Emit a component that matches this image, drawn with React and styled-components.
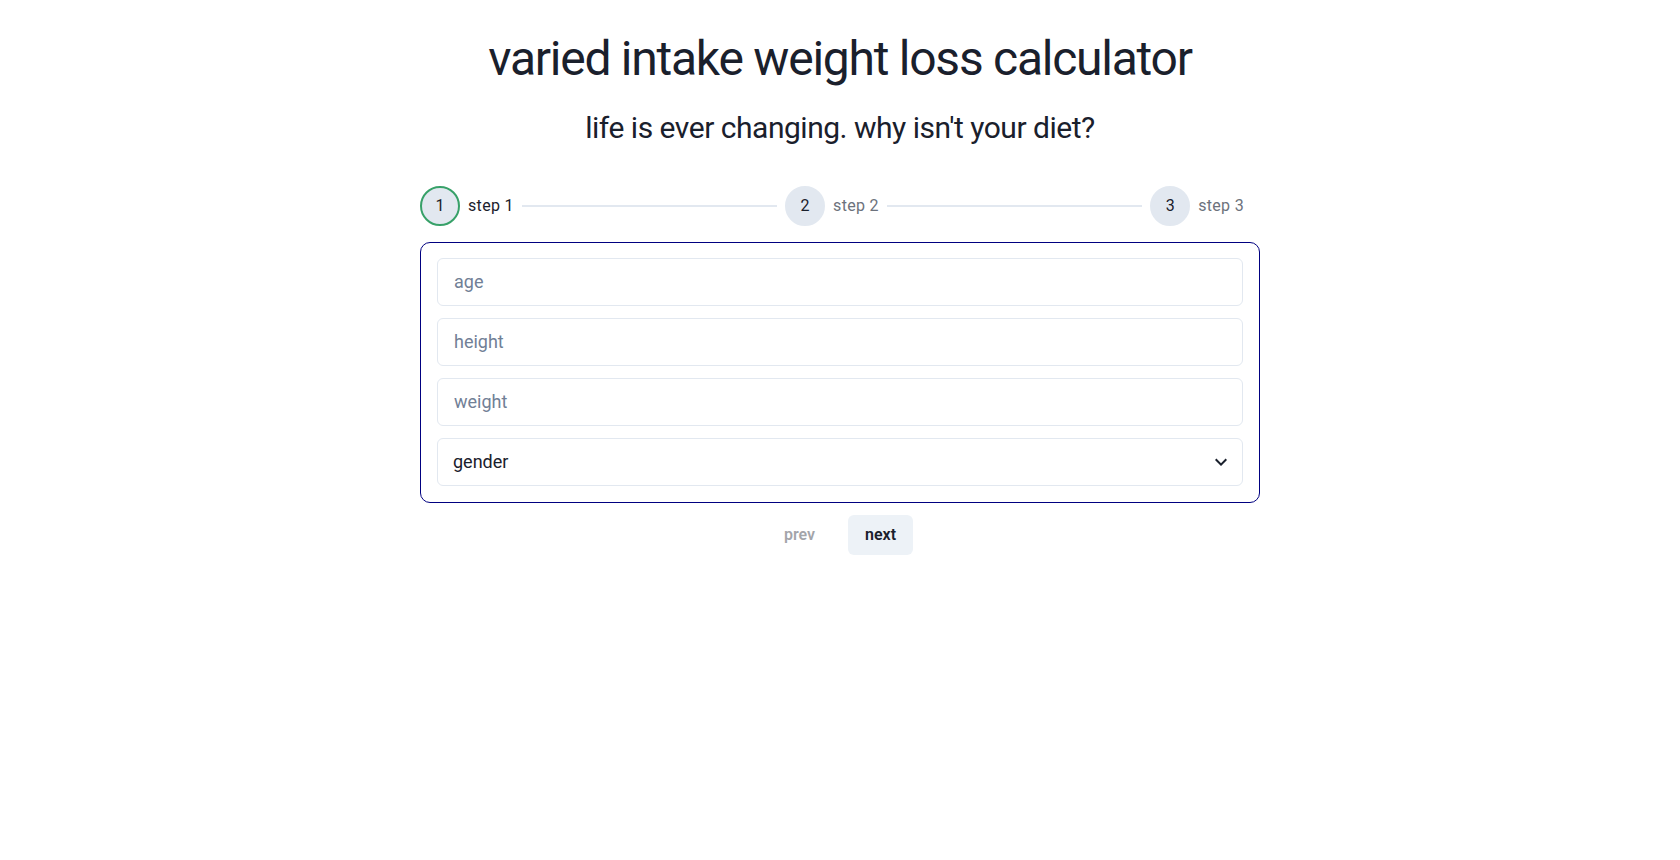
import React from 'react'
import styled, { createGlobalStyle } from 'styled-components'

const GlobalStyle = createGlobalStyle`
  body {
    margin: 0;
    background: #ffffff;
    font-family: Roboto, "Liberation Sans", sans-serif;
    color: #1a202c;
  }
`

const Page = styled.main`
  display: flex;
  flex-direction: column;
  align-items: center;
  padding-top: 30px;
`

const Title = styled.h1`
  margin: 0;
  font-size: 48px;
  line-height: 1.2;
  font-weight: 400;
  letter-spacing: -0.026em;
  color: #1a202c;
`

const Subtitle = styled.h2`
  margin: 22px 0 0;
  font-size: 30px;
  line-height: 1.2;
  font-weight: 400;
  letter-spacing: -0.016em;
  color: #1a202c;
`

const Wizard = styled.section`
  width: 840px;
  margin-top: 40px;
  display: flex;
  flex-direction: column;
`

const Stepper = styled.ol`
  list-style: none;
  margin: 0;
  padding: 0 16px 0 0;
  display: flex;
  gap: 8px;
`

const Step = styled.li`
  display: flex;
  align-items: center;
  gap: 8px;
  flex: ${p => (p.$last ? '0 0 auto' : '1 1 0')};
`

const Indicator = styled.div`
  width: 40px;
  height: 40px;
  box-sizing: border-box;
  border-radius: 50%;
  border: 2px solid ${p => (p.$active ? '#38a169' : '#e2e8f0')};
  background: #e2e8f0;
  display: flex;
  align-items: center;
  justify-content: center;
  font-size: 16px;
  color: #1a202c;
`

const StepLabel = styled.span`
  font-size: 16px;
  letter-spacing: 0.02em;
  color: ${p => (p.$active ? '#1a202c' : '#6c727c')};
  white-space: nowrap;
`

const Separator = styled.div`
  flex: 1;
  height: 2px;
  background: #e2e8f0;
`

const Card = styled.form`
  margin-top: 16px;
  border: 1px solid #000080;
  border-radius: 10px;
  padding: 15px 16px 16px;
  display: flex;
  flex-direction: column;
  gap: 12px;
`

const Field = styled.input`
  height: 48px;
  box-sizing: border-box;
  border: 1px solid #e2e8f0;
  border-radius: 6px;
  padding: 0 16px;
  font-family: Roboto, "Liberation Sans", sans-serif;
  font-size: 18px;
  color: #1a202c;
  outline: none;

  &::placeholder {
    color: #718096;
  }
`

const SelectWrap = styled.div`
  position: relative;
`

const Select = styled.select`
  width: 100%;
  height: 48px;
  box-sizing: border-box;
  border: 1px solid #e2e8f0;
  border-radius: 6px;
  padding: 0 40px 0 15px;
  font-family: Roboto, "Liberation Sans", sans-serif;
  font-size: 18px;
  color: #1a202c;
  background: #ffffff;
  appearance: none;
  outline: none;
`

const SelectIcon = styled.svg`
  position: absolute;
  right: 10px;
  top: 50%;
  transform: translateY(-50%);
  pointer-events: none;
`

const ButtonRow = styled.div`
  margin-top: 12px;
  display: flex;
  justify-content: center;
  gap: 16px;
`

const Button = styled.button`
  height: 40px;
  padding: 0 17px;
  border: none;
  border-radius: 6px;
  font-family: Roboto, "Liberation Sans", sans-serif;
  font-size: 16px;
  font-weight: 600;
  color: #1a202c;
  background: ${p => (p.$ghost ? 'transparent' : '#edf2f7')};
  opacity: ${p => (p.disabled ? 0.4 : 1)};
  cursor: ${p => (p.disabled ? 'not-allowed' : 'pointer')};
`

const steps = ['step 1', 'step 2', 'step 3']

function App() {
  return (
    <>
      <GlobalStyle />
      <Page>
        <Title>varied intake weight loss calculator</Title>
        <Subtitle>life is ever changing. why isn't your diet?</Subtitle>
        <Wizard>
          <Stepper>
            {steps.map((label, i) => {
              const last = i === steps.length - 1
              return (
                <Step key={label} $last={last}>
                  <Indicator $active={i === 0}>{i + 1}</Indicator>
                  <StepLabel $active={i === 0}>{label}</StepLabel>
                  {!last && <Separator />}
                </Step>
              )
            })}
          </Stepper>
          <Card onSubmit={e => e.preventDefault()}>
            <Field placeholder="age" />
            <Field placeholder="height" />
            <Field placeholder="weight" />
            <SelectWrap>
              <Select defaultValue="">
                <option value="">gender</option>
                <option value="male">male</option>
                <option value="female">female</option>
              </Select>
              <SelectIcon width="24" height="24" viewBox="0 0 24 24">
                <path fill="#1a202c" d="M16.59 8.59L12 13.17 7.41 8.59 6 10l6 6 6-6z" />
              </SelectIcon>
            </SelectWrap>
          </Card>
          <ButtonRow>
            <Button $ghost disabled>prev</Button>
            <Button>next</Button>
          </ButtonRow>
        </Wizard>
      </Page>
    </>
  )
}

export default App
